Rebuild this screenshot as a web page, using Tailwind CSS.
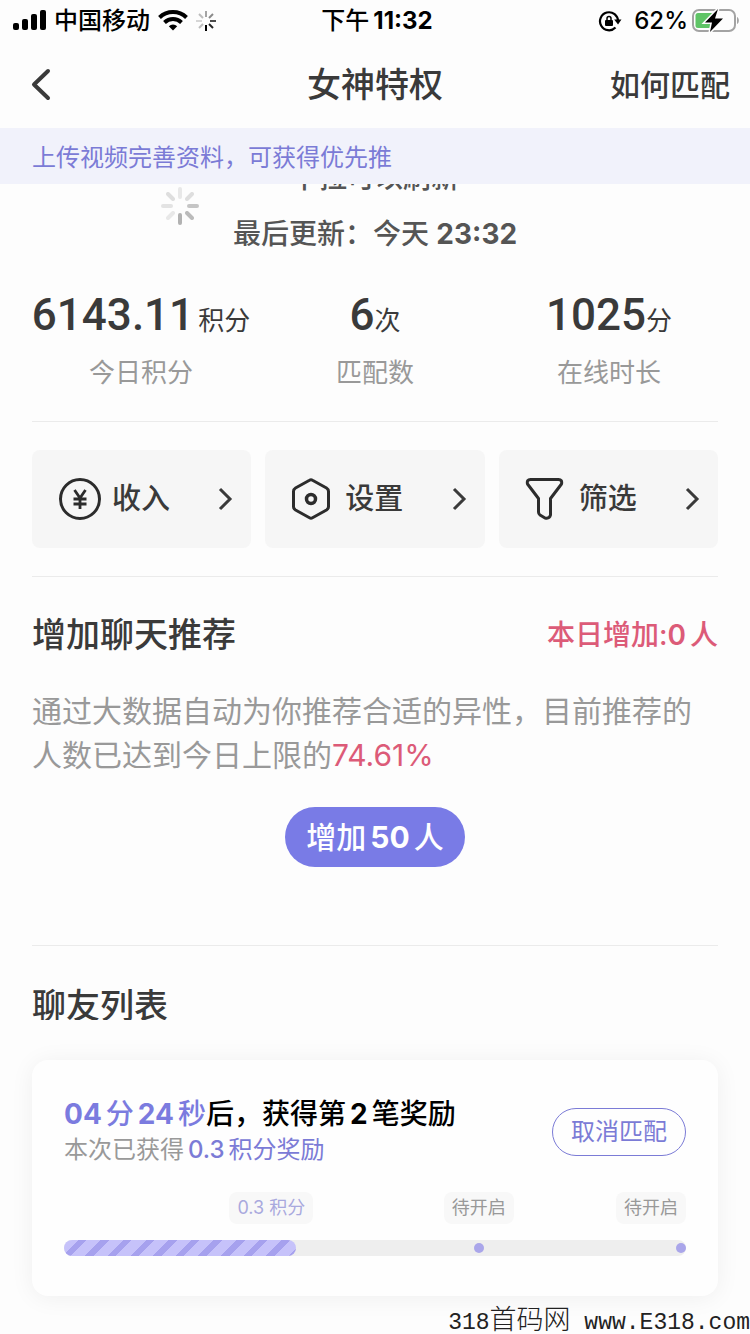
<!DOCTYPE html>
<html lang="zh-CN">
<head>
    <meta charset="UTF-8">
    <meta name="viewport" content="width=device-width, initial-scale=1.0">
    <title>女神特权</title>
    <script src="https://cdn.jsdelivr.net/npm/@tailwindcss/browser@4"></script>
    <style>
        body {
            font-family: Inter, 'Noto Sans CJK SC', sans-serif;
        }
    </style>
</head>
<body class="bg-[#fdfdfd] text-[#3a3a3a]">
    <div class="min-h-screen overflow-hidden">
        <!-- Status bar -->
        <div class="grid grid-cols-3 items-center h-10 pl-3 pr-2 pt-[2px] text-2xl leading-9 font-medium text-black">
            <div class="flex items-center gap-2">
                <svg class="w-[34px] h-[22px]" viewBox="0 0 34 22" fill="currentColor">
                    <rect x="1" y="13" width="6" height="7" rx="2"/>
                    <rect x="10" y="9" width="6" height="11" rx="2"/>
                    <rect x="19" y="4" width="6" height="16" rx="2"/>
                    <rect x="28" y="0" width="6" height="20" rx="2"/>
                </svg>
                <span>中国移动</span>
                <svg class="w-[30px] h-[22px]" viewBox="0 0 30 22" fill="none" stroke="currentColor" stroke-width="4">
                    <path d="M1.500 7.500a19.500 19.500 0 0 1 27 0"/>
                    <path d="M6.500 12.500a12.300 12.300 0 0 1 17 0"/>
                    <path d="M15 20.500l-4.200-4.300a6 6 0 0 1 8.400 0z" fill="currentColor" stroke="none"/>
                </svg>
                <svg class="w-5 h-5" viewBox="0 0 20 20" stroke="#000" stroke-width="2">
                    <path d="M10 0v6" opacity=".35"/>
                    <path d="M17 3l-4 4" opacity=".45"/>
                    <path d="M20 10h-6" opacity=".7"/>
                    <path d="M17 17l-4-4" opacity=".85"/>
                    <path d="M10 20v-6"/>
                    <path d="M3 17l4-4" opacity=".25"/>
                    <path d="M0 10h6" opacity=".15"/>
                    <path d="M3 3l4 4" opacity=".25"/>
                </svg>
            </div>
            <div class="flex items-center justify-center gap-1"><span>下午</span><span class="font-bold">11:32</span></div>
            <div class="flex items-center justify-end gap-1">
                <svg class="w-6 h-6 mr-2" viewBox="0 0 24 24" fill="none" stroke="currentColor" stroke-width="2.200">
                    <path d="M17.500 18.500a9 9 0 1 1 2.500-6"/>
                    <path d="M16.200 10.500h7.300l-3.500 5z" fill="currentColor" stroke="none"/>
                    <rect x="7" y="11" width="8" height="6" rx="1" fill="currentColor" stroke="none"/>
                    <path d="M9 11.500v-2a2 2 0 0 1 4 0v2" stroke-width="1.500"/>
                </svg>
                <span>62%</span>
                <svg class="w-[50px] h-6" viewBox="0 0 50 24" fill="none">
                    <rect x="1" y="1" width="42" height="21" rx="6" stroke="#a3a3a3" stroke-width="2"/>
                    <path d="M6 4h18v15H6a2.500 2.500 0 0 1-2.500-2.500v-10A2.500 2.500 0 0 1 6 4z" fill="#5fc466"/>
                    <path d="M45 8c2.500 1 2.500 6 0 7z" fill="#a3a3a3"/>
                    <path d="M26 0L13 13.500h7L18 23l13-13.500h-8z" fill="#000" stroke="#fdfdfd" stroke-width="3" paint-order="stroke"/>
                </svg>
            </div>
        </div>

        <!-- Title bar -->
        <header class="grid grid-cols-3 items-center h-[88px] px-5 pt-[2px] font-medium">
            <button type="button" aria-label="返回" class="w-10 h-10 pl-2">
                <svg class="w-6 h-9" viewBox="0 0 24 36" fill="none" stroke="#3a3a3a" stroke-width="4" stroke-linecap="round" stroke-linejoin="round">
                    <path d="M20 4L6 17.500l14 13.500"/>
                </svg>
            </button>
            <h1 class="text-center text-[34px] leading-10">女神特权</h1>
            <a href="#" class="text-right text-3xl leading-10">如何匹配</a>
        </header>

        <div class="relative z-10 h-14 bg-[#f1f2fb] px-8 pt-[2px] text-2xl leading-14 text-[#7b7bd6]">上传视频完善资料，可获得优先推</div>

        <!-- Pull to refresh -->
        <div class="relative -mt-[34px] text-center text-[28px] leading-14 font-medium text-[#555]">
            <svg class="absolute left-40 top-9 w-10 h-10" viewBox="0 0 40 40" stroke="#999" stroke-width="4" stroke-linecap="round">
                <path d="M20 3v8" opacity=".2"/>
                <path d="M32 8l-5 5" opacity=".3"/>
                <path d="M37 20h-8" opacity=".55"/>
                <path d="M32 32l-5-5" opacity=".65"/>
                <path d="M20 37v-8" opacity=".75"/>
                <path d="M8 32l5-5" opacity=".2"/>
                <path d="M3 20h8" opacity=".25"/>
                <path d="M8 8l5 5" opacity=".3"/>
            </svg>
            <p>下拉可以刷新</p>
            <p>最后更新：今天 <span class="font-bold">23:32</span></p>
        </div>

        <!-- Today's numbers -->
        <div class="grid grid-cols-3 mt-[21px] px-6 text-center text-[26px] whitespace-nowrap">
            <div>
                <p class="leading-16"><span class="mr-1 font-[Roboto] text-[44px] font-medium leading-16">6143.11</span>积分</p>
                <p class="leading-10 text-[#999]">今日积分</p>
            </div>
            <div>
                <p class="leading-16"><span class="font-[Roboto] text-[44px] font-medium leading-16">6</span>次</p>
                <p class="leading-10 text-[#999]">匹配数</p>
            </div>
            <div>
                <p class="leading-16"><span class="font-[Roboto] text-[44px] font-medium leading-16">1025</span>分</p>
                <p class="leading-10 text-[#999]">在线时长</p>
            </div>
        </div>

        <main class="px-8">
            <div class="grid grid-cols-3 gap-[14px] mt-7 border-y border-[#ebebeb] py-7 text-[29px] font-medium">
                <button type="button" class="flex items-center h-[98px] rounded-lg bg-[#f6f6f6] pl-[26px] pr-4">
                    <svg class="w-11 h-11 mr-[10px]" viewBox="0 0 44 44" fill="none" stroke="#2c2c2c" stroke-width="3">
                        <circle cx="22" cy="22" r="19.500"/>
                        <path d="M16.500 13l5.500 8 5.500-8M22 21v11M15.500 22h13M15.500 27h13" stroke-width="2.800"/>
                    </svg>
                    <span>收入</span>
                    <svg class="w-5 h-7 ml-auto" viewBox="0 0 20 28" fill="none" stroke="#3a3a3a" stroke-width="3"><path d="M5 4l10 10-10 10"/></svg>
                </button>
                <button type="button" class="flex items-center h-[98px] rounded-lg bg-[#f6f6f6] pl-[26px] pr-4">
                    <svg class="w-11 h-11 mr-[10px]" viewBox="0 0 44 44" fill="none" stroke="#2c2c2c" stroke-width="3" stroke-linejoin="round">
                        <path d="M18.500 3.200q1.500-.900 3 0l14 7.800q2 1.200 2 3.500v15q0 2.300-2 3.500l-14 7.800q-1.500.900-3 0l-14-7.800q-2-1.200-2-3.500v-15q0-2.300 2-3.500z"/>
                        <circle cx="20" cy="22" r="4.500" stroke-width="3.500"/>
                    </svg>
                    <span>设置</span>
                    <svg class="w-5 h-7 ml-auto" viewBox="0 0 20 28" fill="none" stroke="#3a3a3a" stroke-width="3"><path d="M5 4l10 10-10 10"/></svg>
                </button>
                <button type="button" class="flex items-center h-[98px] rounded-lg bg-[#f6f6f6] pl-[26px] pr-4">
                    <svg class="w-11 h-11 mr-[10px]" viewBox="0 0 44 44" fill="none" stroke="#2c2c2c" stroke-width="3" stroke-linejoin="round">
                        <path d="M5.500 2.500h28q4 0 3 4.500L25.500 21.500V38q-1 4-5.500 3l-5-3q-1.500-1-1.500-3V21.500L2.500 7q-1-4.500 3-4.500z"/>
                    </svg>
                    <span>筛选</span>
                    <svg class="w-5 h-7 ml-auto" viewBox="0 0 20 28" fill="none" stroke="#3a3a3a" stroke-width="3"><path d="M5 4l10 10-10 10"/></svg>
                </button>
            </div>

            <section class="border-b border-[#ebebeb] pt-[34px] pb-[78px]">
                <div class="flex items-center justify-between leading-12 font-medium">
                    <h2 class="text-[34px]">增加聊天推荐</h2>
                    <p class="text-[28px] text-[#dc5b78]">本日增加:<span class="mr-1 font-semibold">0</span>人</p>
                </div>
                <p class="mt-[30px] text-3xl leading-[44px] text-[#999]">通过大数据自动为你推荐合适的异性，目前推荐的人数已达到今日上限的<span class="text-[#dc5b78]">74.61%</span></p>
                <button type="button" class="flex items-center justify-center gap-1 w-[180px] h-15 mt-[30px] mx-auto rounded-full bg-[#797be6] text-3xl font-medium text-white">增加<span class="font-bold">50</span>人</button>
            </section>

            <section class="pt-9">
                <h2 class="h-[38px] overflow-hidden text-[34px] leading-12 font-medium">聊友列表</h2>
                <div class="mt-10 rounded-2xl bg-[#fefefe] px-8 pt-9 pb-10 shadow-[0_2px_24px_rgba(0,0,0,0.06)]">
                    <div class="flex items-center justify-between">
                        <div>
                            <h3 class="text-[28px] leading-9 font-medium text-black"><span class="text-[#7b7bdf]"><span class="mr-1 font-bold">04</span>分<span class="mx-1 font-bold">24</span>秒</span>后，获得第<span class="mx-1 font-bold">2</span>笔奖励</h3>
                            <p class="text-2xl leading-9 text-[#999]">本次已获得<span class="text-[#7b7bd6]"><span class="mx-1 font-medium">0.3</span>积分奖励</span></p>
                        </div>
                        <button type="button" class="w-[134px] h-12 rounded-full border border-[#7b7bd6] text-2xl text-[#7b7bd6]">取消匹配</button>
                    </div>
                    <div class="flex mt-6 text-lg leading-8 text-[#999]">
                        <div class="w-2/3 text-center"><span class="inline-block rounded-lg bg-[#f8f8f8] px-2 text-[#a9a9de]">0.3 积分</span></div>
                        <div class="flex justify-between w-1/3">
                            <span class="-translate-x-1/2 rounded-lg bg-[#f8f8f8] px-2">待开启</span>
                            <span class="rounded-lg bg-[#f8f8f8] px-2">待开启</span>
                        </div>
                    </div>
                    <div role="progressbar" aria-valuenow="37" class="relative h-4 mt-4 rounded-full bg-[#eee]">
                        <div class="h-4 rounded-full bg-[repeating-linear-gradient(135deg,#c6c2fa_0_10px,#a6a1ee_10px_16px)]" style="width: 37.3%"></div>
                        <span class="absolute left-2/3 top-[3px] w-[10px] h-[10px] -translate-x-1/2 rounded-full bg-[#aaa6ea]"></span>
                        <span class="absolute right-0 top-[3px] w-[10px] h-[10px] rounded-full bg-[#aaa6ea]"></span>
                    </div>
                </div>
            </section>
        </main>

        <footer class="mt-[14px] text-right font-['Liberation_Mono','Noto_Sans_CJK_SC',monospace] text-[23px] leading-6 text-[#222]">318<span class="text-[27px] font-light">首码网</span> www.E318.com</footer>
    </div>
</body>
</html>
